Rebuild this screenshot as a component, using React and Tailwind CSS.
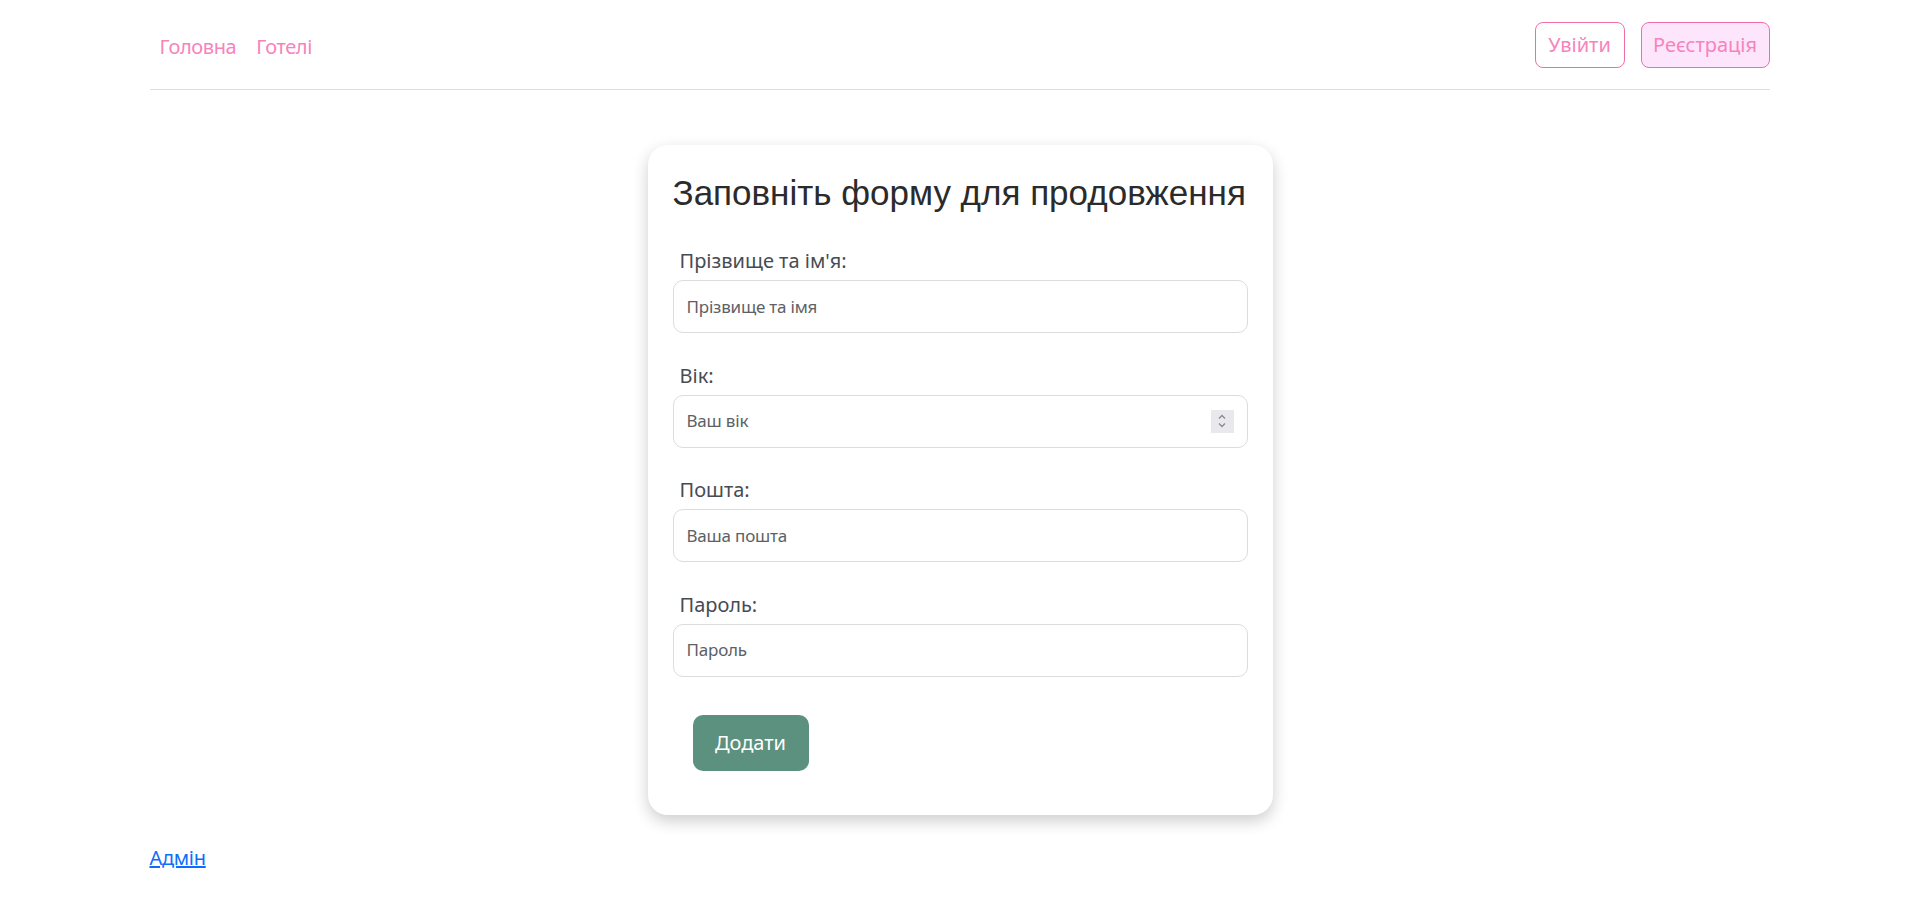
import React from 'react';

const Field = ({ label, placeholder, type = 'text', spinner = false }) => (
    <div className="flex flex-col">
        <label className="pl-[7px] mb-[4px] text-[20px] leading-[30px] text-[#474c52]">{label}</label>
        <div className="flex items-center h-[53px] rounded-[10px] border border-[#dcdcdc] bg-white px-[13px]">
            <input
                type={type}
                placeholder={placeholder}
                className="flex-1 min-w-0 bg-transparent text-[17px] tracking-[-0.2px] text-[#333] placeholder-[#5c6166] outline-none"
            />
            {spinner && (
                <div className="flex flex-col items-center justify-center w-[23px] h-[23px] bg-[#e9e9ed]">
                    <svg width="10" height="18" viewBox="0 0 10 18" fill="none" stroke="#8a8a90" strokeWidth="1.3">
                        <path d="M2 6.5 L5 3.5 L8 6.5" />
                        <path d="M2 11.5 L5 14.5 L8 11.5" />
                    </svg>
                </div>
            )}
        </div>
    </div>
);

export default function App() {
    return (
        <div className="min-h-screen bg-white font-['Segoe_UI','Noto_Sans',sans-serif]">
            <div className="mx-auto w-[1620px]">

                {/* Header */}
                <nav className="flex items-center justify-between h-[90px] border-b border-[#dedede]">
                    <div className="flex items-center pt-[4px]">
                        <a href="#" className="px-[10px] text-[20px] tracking-[-0.4px] text-[#f783bd]">Головна</a>
                        <a href="#" className="px-[10px] text-[20px] tracking-[-0.4px] text-[#f783bd]">Готелі</a>
                    </div>
                    <div className="flex items-center gap-[16px]">
                        <button className="h-[46px] w-[90px] rounded-[8px] border border-[#ee6fa8] bg-white text-[20px] text-[#f783bd]">
                            Увійти
                        </button>
                        <button className="h-[46px] w-[129px] rounded-[8px] border border-[#ee6fa8] bg-[#fde6fb] text-[20px] text-[#f783bd]">
                            Реєстрація
                        </button>
                    </div>
                </nav>

                {/* Form card */}
                <div className="flex justify-center mt-[55px] pl-[1px]">
                    <div className="w-[625px] rounded-[20px] bg-white px-[25px] pt-[27px] pb-[44px] shadow-[0_6px_16px_rgba(0,0,0,0.2)]">
                        <h3 className="text-[35px] leading-[42px] text-[#2b2b2b] font-['Liberation_Sans',Arial,sans-serif]">
                            Заповніть форму для продовження
                        </h3>
                        <div className="flex flex-col gap-[27.5px] mt-[32px]">
                            <Field label="Прізвище та ім'я:" placeholder="Прізвище та імя" />
                            <Field label="Вік:" placeholder="Ваш вік" spinner />
                            <Field label="Пошта:" placeholder="Ваша пошта" />
                            <Field label="Пароль:" placeholder="Пароль" type="password" />
                        </div>
                        <button className="mt-[38px] ml-[20px] h-[56px] w-[116px] rounded-[10px] bg-[#5b917e] text-[20px] text-white">
                            Додати
                        </button>
                    </div>
                </div>

                <div className="mt-[28px]">
                    <a href="#" className="text-[20px] leading-[30px] tracking-[-0.3px] text-[#0d6efd] underline">Адмін</a>
                </div>
            </div>
        </div>
    );
}
